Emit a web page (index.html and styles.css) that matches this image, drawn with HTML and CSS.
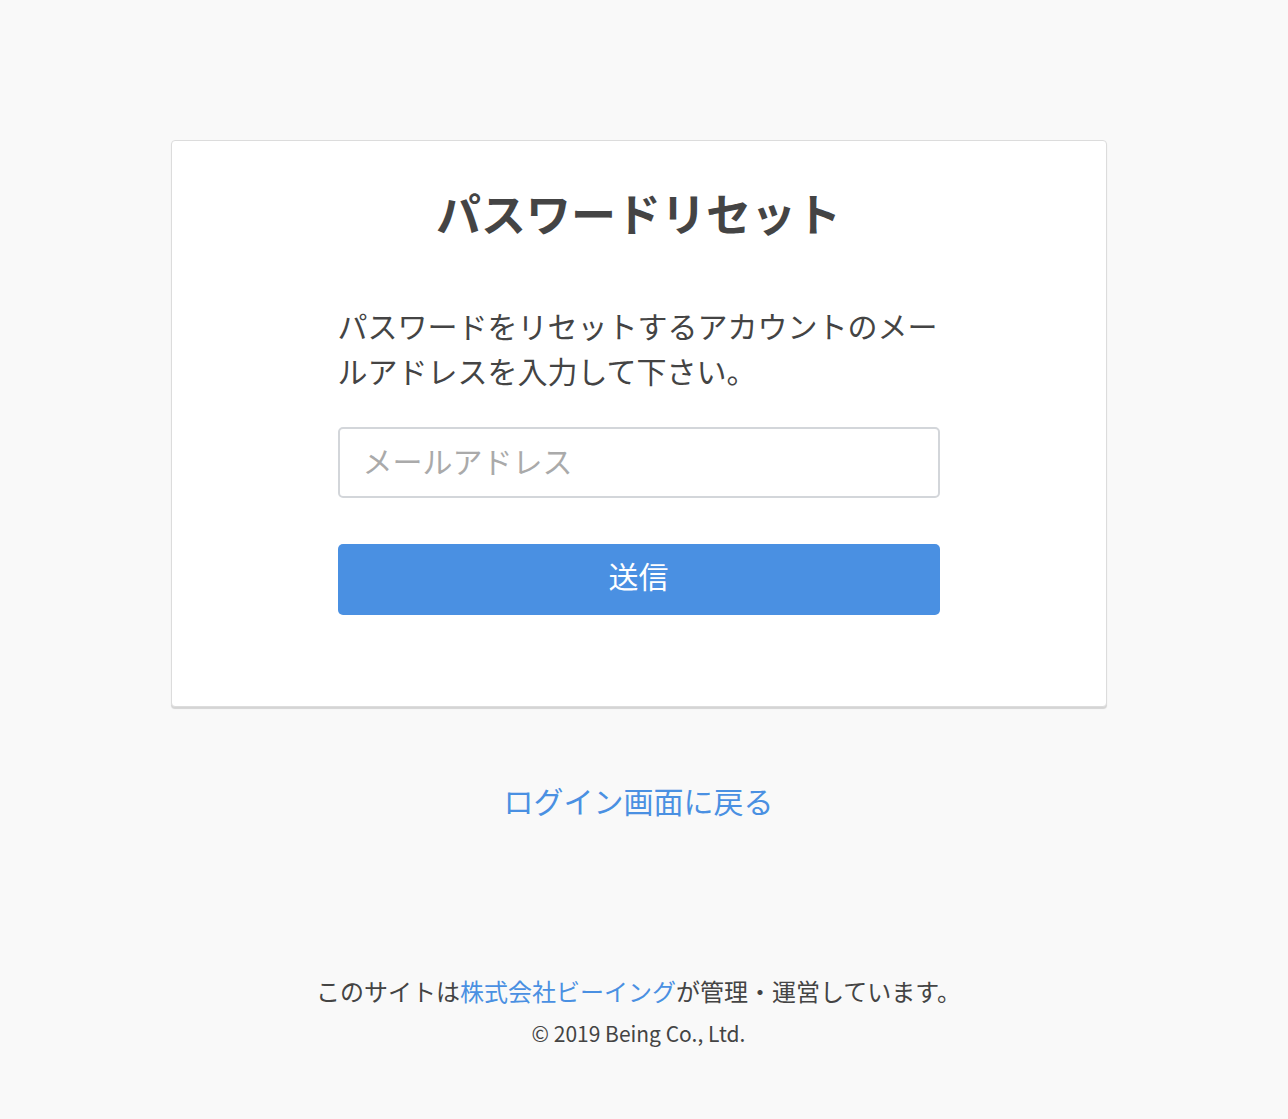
FILE: index.html
```html
<!DOCTYPE html>
<html lang="ja">
<head>
    <meta charset="UTF-8">
    <meta name="viewport" content="width=device-width, initial-scale=1.0">
    <title>パスワードリセット | Being</title>
    <link rel="stylesheet" href="styles.css">
</head>
<body>
    <main class="page">
        <div class="reset-card">
            <h1 class="reset-title">パスワードリセット</h1>
            <form class="reset-form" onsubmit="return false;">
                <p class="reset-text">パスワードをリセットするアカウントのメールアドレスを入力して下さい。</p>
                <input type="email" class="email-input" placeholder="メールアドレス">
                <button type="submit" class="submit-btn">送信</button>
            </form>
        </div>

        <a href="#" class="back-link">ログイン画面に戻る</a>

        <footer class="site-footer">
            <p class="footer-note">このサイトは<a href="#">株式会社ビーイング</a>が管理・運営しています。</p>
            <p class="copyright">© 2019 Being Co., Ltd.</p>
        </footer>
    </main>
</body>
</html>
```

FILE: styles.css
```css
body {
    font-family: 'Noto Sans CJK JP', 'Noto Sans', sans-serif;
    margin: 0;
    padding: 0 11px 0 0;
    background-color: #f9f9f9;
    color: #444;
}

.page {
    display: flex;
    flex-direction: column;
    align-items: center;
    padding-top: 140px;
}

.reset-card {
    width: 936px;
    box-sizing: border-box;
    padding: 39px 166px 91px;
    background: white;
    border: 1px solid #dcdcdc;
    border-radius: 4px;
    box-shadow: 0 2px 1px rgba(0,0,0,0.15);
}

.reset-title {
    margin: 0;
    font-size: 45px;
    line-height: 66px;
    font-weight: bold;
    text-align: center;
    color: #444;
}

.reset-form {
    display: flex;
    flex-direction: column;
}

.reset-text {
    margin: 57px 0 34px;
    font-size: 30px;
    line-height: 45px;
}

.email-input {
    height: 71px;
    box-sizing: border-box;
    padding: 0 23px 5px;
    font-family: inherit;
    font-size: 30px;
    color: #444;
    border: 2px solid #d3d6da;
    border-radius: 5px;
    outline: none;
}

.email-input::placeholder {
    color: #aaa;
}

.submit-btn {
    height: 71px;
    margin-top: 46px;
    padding: 0 0 9px;
    background-color: #4a90e2;
    color: white;
    border: none;
    border-radius: 5px;
    font-family: inherit;
    font-size: 30px;
    cursor: pointer;
}

.back-link {
    margin-top: 71px;
    font-size: 30px;
    line-height: 45px;
    color: #4a90e2;
    text-decoration: none;
}

.site-footer {
    margin-top: 150px;
    text-align: center;
}

.footer-note {
    margin: 0;
    font-size: 24px;
    line-height: 36px;
}

.footer-note a {
    color: #4a90e2;
    text-decoration: none;
}

.copyright {
    margin: 9px 0 0;
    font-size: 21px;
    line-height: 30px;
}
```
